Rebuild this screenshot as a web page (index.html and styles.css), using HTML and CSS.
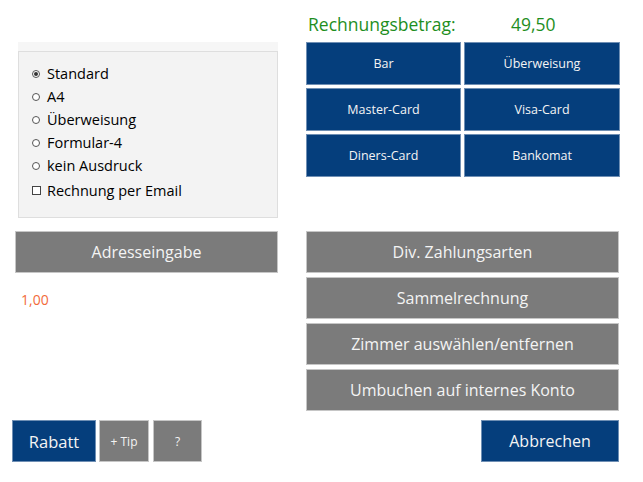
FILE: index.html
```html
<!DOCTYPE html>
<html lang="de">
<head>
<meta charset="utf-8">
<title>Zahlung</title>
<link rel="stylesheet" href="styles.css">
</head>
<body>
<div class="page">
  <div class="col-left">
    <div class="panel-strip"></div>
    <div class="panel">
      <div class="opt"><span class="radio checked"></span>Standard</div>
      <div class="opt"><span class="radio"></span>A4</div>
      <div class="opt"><span class="radio"></span>Überweisung</div>
      <div class="opt"><span class="radio"></span>Formular-4</div>
      <div class="opt"><span class="radio"></span>kein Ausdruck</div>
      <div class="opt opt-check"><span class="check"></span>Rechnung per Email</div>
    </div>
    <div class="btn gray btn-address">Adresseingabe</div>
    <div class="amount-small">1,00</div>
    <div class="bottom-left">
      <div class="btn blue btn-rabatt">Rabatt</div>
      <div class="btn gray btn-small btn-tip">+ Tip</div>
      <div class="btn gray btn-small btn-q">?</div>
    </div>
  </div>
  <div class="col-right">
    <div class="total">
      <span class="total-label">Rechnungsbetrag:</span>
      <span class="total-value">49,50</span>
    </div>
    <div class="pay-grid">
      <div class="btn blue pay">Bar</div>
      <div class="btn blue pay">Überweisung</div>
      <div class="btn blue pay">Master-Card</div>
      <div class="btn blue pay">Visa-Card</div>
      <div class="btn blue pay">Diners-Card</div>
      <div class="btn blue pay">Bankomat</div>
    </div>
    <div class="action-list">
      <div class="btn gray action">Div. Zahlungsarten</div>
      <div class="btn gray action">Sammelrechnung</div>
      <div class="btn gray action">Zimmer auswählen/entfernen</div>
      <div class="btn gray action">Umbuchen auf internes Konto</div>
    </div>
    <div class="btn blue btn-cancel">Abbrechen</div>
  </div>
</div>
</body>
</html>
```

FILE: styles.css
```css
html, body {
  margin: 0;
  padding: 0;
  background: #ffffff;
}

body {
  font-family: "Open Sans", "Noto Sans", sans-serif;
  color: #000;
}

.page {
  display: flex;
  width: 643px;
  height: 482px;
  box-sizing: border-box;
  padding: 0 0 20px 12px;
  gap: 28px;
}

.col-left {
  width: 266px;
  display: flex;
  flex-direction: column;
}

.col-right {
  width: 313px;
  display: flex;
  flex-direction: column;
}

.btn {
  display: flex;
  align-items: center;
  justify-content: center;
  box-sizing: border-box;
  color: #f4f4f4;
  white-space: nowrap;
}

.blue {
  background: #053e7c;
  border: 1px solid #6f8fb4;
}

.gray {
  background: #7b7b7b;
  border: 1px solid #c6c6c6;
}

/* Left column */
.panel-strip {
  margin: 42px 0 0 6px;
  height: 9px;
  background: #f6f6f6;
}

.panel {
  margin-left: 6px;
  height: 167px;
  box-sizing: border-box;
  background: #f3f3f3;
  border: 1px solid #dedede;
  padding: 10px 0 0 13px;
  font-size: 14.5px;
}

.opt {
  display: flex;
  align-items: center;
  height: 23px;
}

.opt-check {
  margin-top: 2px;
}

.radio {
  width: 6px;
  height: 6px;
  border: 1px solid #555;
  border-radius: 50%;
  margin-right: 7px;
  position: relative;
  background: #fff;
}

.radio.checked::after {
  content: "";
  position: absolute;
  left: 1px;
  top: 1px;
  width: 4px;
  height: 4px;
  border-radius: 50%;
  background: #333;
}

.check {
  width: 7px;
  height: 7px;
  border: 1px solid #444;
  margin-right: 6px;
  background: #fff;
}

.btn-address {
  margin: 13px 0 0 3px;
  height: 42px;
  width: 263px;
  font-size: 16px;
}

.amount-small {
  margin: 17px 0 0 9px;
  line-height: 20px;
  font-size: 14px;
  color: #f26b3a;
}

.bottom-left {
  margin-top: auto;
  display: flex;
  gap: 3px;
}

.btn-rabatt {
  width: 84px;
  height: 42px;
  font-size: 16.5px;
}

.btn-small {
  height: 42px;
  font-size: 12px;
}

.btn-tip {
  width: 50px;
}

.btn-q {
  width: 49px;
  margin-left: 1px;
}

/* Right column */
.total {
  height: 42px;
  box-sizing: border-box;
  display: flex;
  align-items: center;
  padding: 5px 0 0 2px;
  color: #1e8e1e;
  font-size: 17.5px;
}

.total-label {
  width: 203px;
}

.pay-grid {
  display: grid;
  grid-template-columns: 155px 156px;
  grid-auto-rows: 43px;
  gap: 3px;
}

.pay {
  font-size: 12.5px;
}

.action-list {
  margin-top: 54px;
  display: flex;
  flex-direction: column;
  gap: 4px;
}

.action {
  height: 42px;
  font-size: 16px;
}

.btn-cancel {
  margin-top: auto;
  align-self: flex-end;
  width: 138px;
  height: 42px;
  font-size: 16px;
}
```
